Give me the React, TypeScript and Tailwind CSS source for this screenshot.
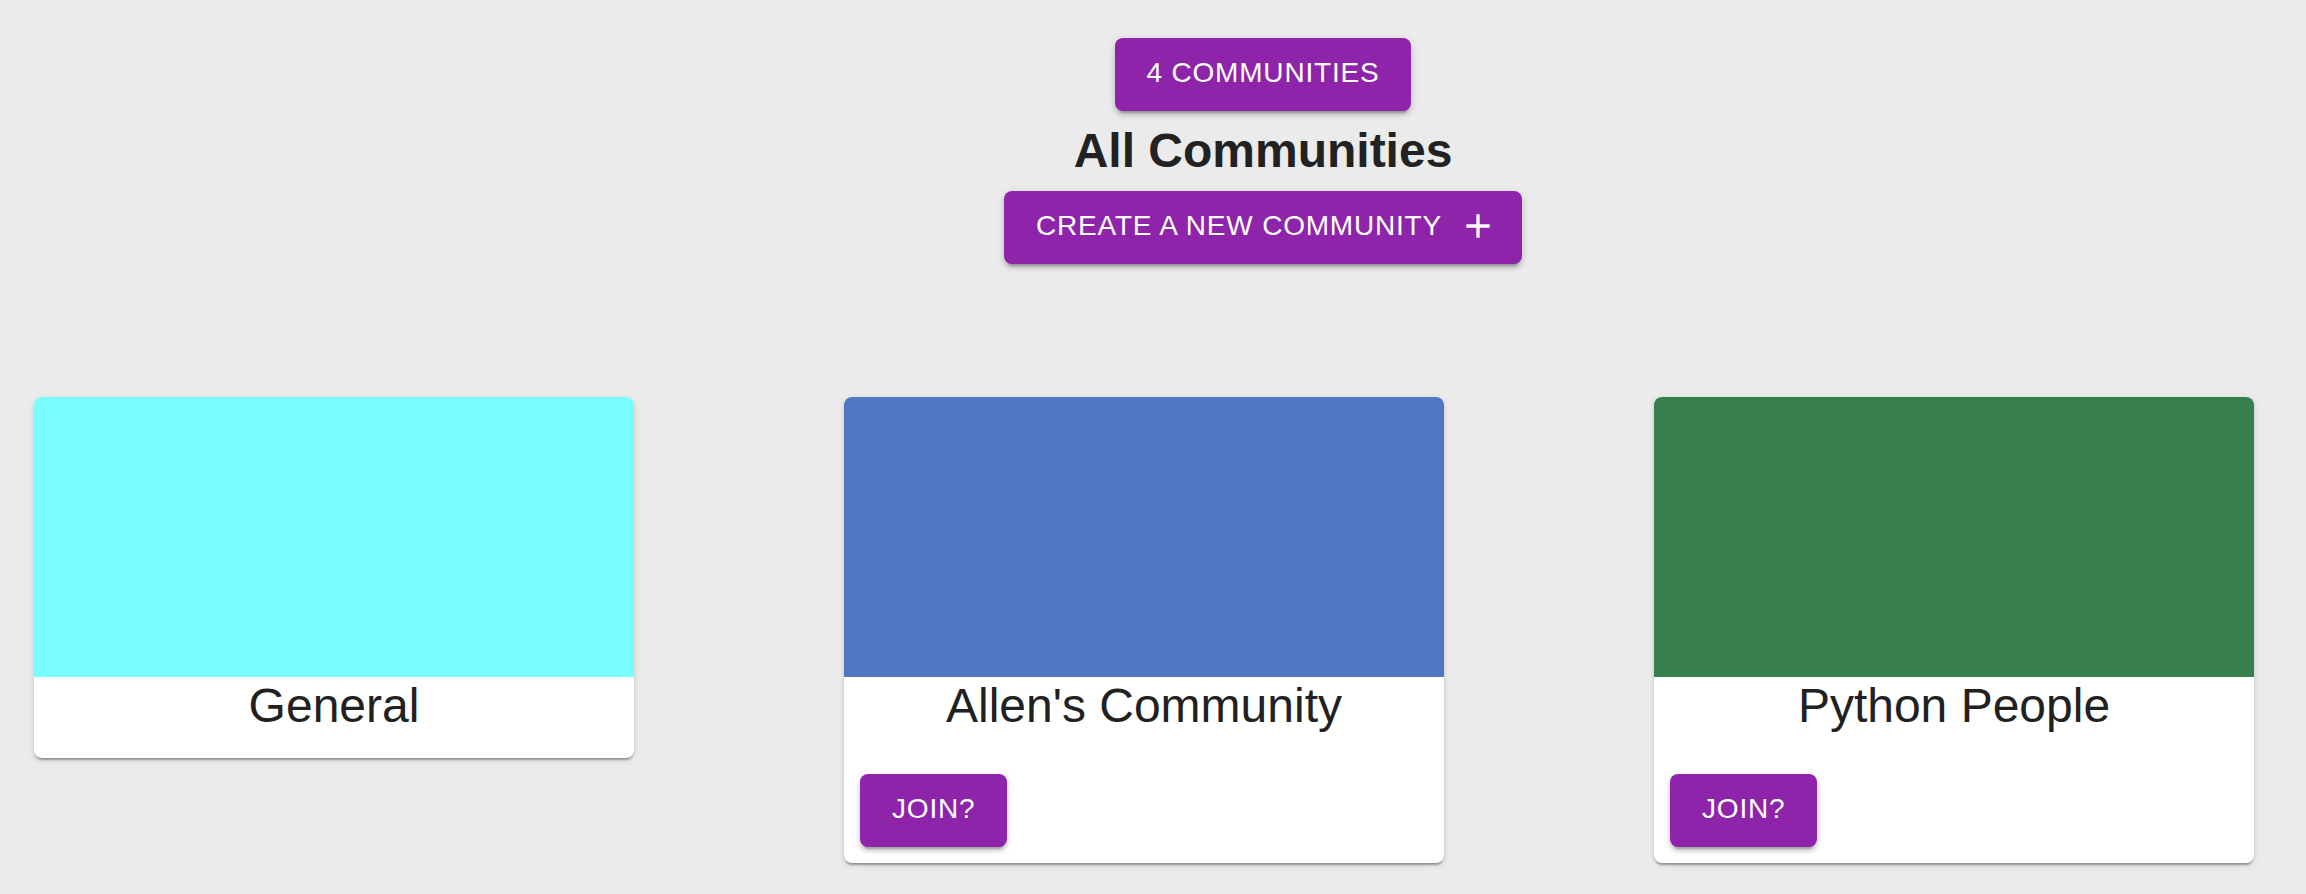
const communities = [
  { name: "General", color: "bg-[#78fcfe]", joinable: false },
  { name: "Allen's Community", color: "bg-[#5077c1]", joinable: true },
  { name: "Python People", color: "bg-[#387f4e]", joinable: true },
];

const buttonClass =
  "flex items-center rounded-[8px] bg-[#8e24aa] px-[32px] pt-[10px] pb-[14px] text-[28px] leading-[49px] tracking-[0.8px] text-white uppercase shadow-[0_6px_2px_-4px_rgba(0,0,0,0.2),0_4px_4px_0_rgba(0,0,0,0.14),0_2px_10px_0_rgba(0,0,0,0.12)]";

function CommunityCard({
  name,
  color,
  joinable,
}: {
  name: string;
  color: string;
  joinable: boolean;
}) {
  return (
    <div className="flex w-[600px] flex-col self-start overflow-hidden rounded-[8px] bg-white shadow-[0_4px_2px_-2px_rgba(0,0,0,0.2),0_2px_2px_0_rgba(0,0,0,0.14),0_2px_6px_0_rgba(0,0,0,0.12)]">
      <div className={`h-[280px] w-full ${color}`} />
      <div className="h-[81px] text-center text-[48px] leading-[58px] text-[#212121]">
        {name}
      </div>
      {joinable && (
        <div className="flex p-[16px]">
          <button className={buttonClass}>Join?</button>
        </div>
      )}
    </div>
  );
}

export default function App() {
  return (
    <div
      className="min-h-screen w-full bg-[#ebebeb] pt-[38px]"
      style={{ fontFamily: '"Liberation Sans", Arial, sans-serif' }}
    >
      <div className="flex flex-col items-center gap-y-[8px] pl-[220px]">
        <button className={buttonClass}>4 Communities</button>
        <h1 className="text-[48px] leading-[64px] font-bold text-[#222222]">
          All Communities
        </h1>
        <button className={buttonClass}>
          Create a new community
          <span className="ml-[16px] -mr-[8px] flex h-[40px] w-[40px] items-center justify-center">
            <svg viewBox="0 0 24 24" className="h-[40px] w-[40px]" fill="currentColor">
              <path d="M19 13h-6v6h-2v-6H5v-2h6V5h2v6h6v2z" />
            </svg>
          </span>
        </button>
      </div>
      <div className="mt-[133px] flex gap-x-[210px] pl-[34px]">
        {communities.map((c) => (
          <CommunityCard key={c.name} {...c} />
        ))}
      </div>
    </div>
  );
}
